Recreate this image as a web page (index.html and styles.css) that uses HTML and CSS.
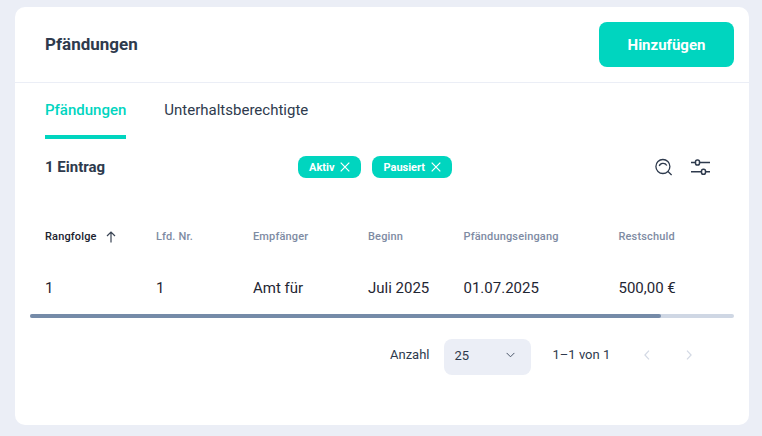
FILE: index.html
```html
<!DOCTYPE html>
<html lang="de">
<head>
<meta charset="utf-8">
<title>Pfändungen</title>
<link rel="stylesheet" href="styles.css">
</head>
<body>
<main class="card">
  <header class="card-head">
    <h1 class="title">Pfändungen</h1>
    <button class="add-btn" type="button">Hinzufügen</button>
  </header>
  <nav class="tabs">
    <a class="tab tab-active">Pfändungen</a>
    <a class="tab">Unterhaltsberechtigte</a>
  </nav>
  <section class="toolbar">
    <div class="count">1 Eintrag</div>
    <div class="chips">
      <span class="chip">Aktiv
        <svg class="chip-x" viewBox="0 0 10 10"><path d="M.7.7l8.6 8.6M9.3.7L.7 9.3"/></svg>
      </span>
      <span class="chip">Pausiert
        <svg class="chip-x" viewBox="0 0 10 10"><path d="M.7.7l8.6 8.6M9.3.7L.7 9.3"/></svg>
      </span>
    </div>
    <div class="tools">
      <svg class="tool tool-search" viewBox="0 0 17 20"><circle cx="7.900" cy="9.500" r="7"/><path d="M4.300 9C5 6 10 5.300 11.800 8.500M13 14.500l3.600 3.600"/></svg>
      <svg class="tool tool-filter" viewBox="0 0 19 20"><path d="M0 5.500h4.500M8.500 5.500H19M0 14.800h10.500M14.500 14.800H19"/><rect x="4.500" y="3" width="4" height="5" rx="1.800"/><rect x="10.500" y="12.300" width="4" height="5" rx="1.800"/></svg>
    </div>
  </section>
  <section class="table">
    <div class="row row-head">
      <div class="th th-sorted">Rangfolge
        <svg class="sort" viewBox="0 0 10 12"><path d="M5 11.500V1M1 5l4-4 4 4"/></svg>
      </div>
      <div class="th">Lfd. Nr.</div>
      <div class="th">Empfänger</div>
      <div class="th">Beginn</div>
      <div class="th">Pfändungseingang</div>
      <div class="th">Restschuld</div>
    </div>
    <div class="row row-body">
      <div class="td">1</div>
      <div class="td">1</div>
      <div class="td">Amt für</div>
      <div class="td">Juli 2025</div>
      <div class="td">01.07.2025</div>
      <div class="td">500,00 €</div>
    </div>
    <div class="scrollbar"><div class="thumb"></div></div>
  </section>
  <footer class="pager">
    <span class="pager-label">Anzahl</span>
    <div class="select">
      <span>25</span>
      <svg class="chev" viewBox="0 0 10 6"><path d="M.7.7L5 5l4.300-4.300"/></svg>
    </div>
    <span class="pager-range">1–1 von 1</span>
    <div class="pager-nav">
      <svg class="nav" viewBox="0 0 6 10"><path d="M5 .7L.9 5 5 9.300"/></svg>
      <svg class="nav" viewBox="0 0 6 10"><path d="M1 .7L5.100 5 1 9.300"/></svg>
    </div>
  </footer>
</main>
</body>
</html>
```

FILE: styles.css
```css
* {
  box-sizing: border-box;
}

html,
body {
  height: 100%;
}

body {
  margin: 0;
  padding: 7px 13px 11px 15px;
  background: #ebeef6;
  font-family: Roboto, "Liberation Sans", sans-serif;
  color: #2e3a4d;
  overflow: hidden;
}

.card {
  height: 418px;
  background: #fff;
  border-radius: 10px;
  display: flex;
  flex-direction: column;
}

.card-head {
  height: 76px;
  padding: 15px 15px 15px 30px;
  border-bottom: 1px solid #ebeef6;
  display: flex;
  align-items: center;
  justify-content: space-between;
  flex-shrink: 0;
}

.title {
  margin: 0;
  padding-bottom: 2px;
  font-size: 17px;
  font-weight: 700;
  line-height: 20px;
  color: #2e3a4d;
}

.add-btn {
  width: 135px;
  height: 45px;
  border: 0;
  border-radius: 8px;
  background: #00d5bf;
  color: #fff;
  font: 700 15px/20px Roboto, "Liberation Sans", sans-serif;
}

.tabs {
  display: flex;
  gap: 38px;
  padding: 0 30px;
  height: 56px;
  flex-shrink: 0;
}

.tab {
  height: 56px;
  padding-top: 18px;
  font-size: 15px;
  line-height: 18px;
  color: #2e3a4d;
}

.tab-active {
  color: #00d5bf;
  font-weight: 500;
  border-bottom: 4px solid #00d5bf;
}

.toolbar {
  height: 56px;
  padding: 0 39px 0 30px;
  display: grid;
  grid-template-columns: 253px 1fr auto;
  align-items: center;
  flex-shrink: 0;
}

.count {
  font-size: 15px;
  font-weight: 700;
  color: #2e3a4d;
}

.chips {
  display: flex;
  gap: 11px;
}

.chip {
  height: 22px;
  padding: 0 11px;
  border-radius: 8px;
  background: #00d5bf;
  color: #fff;
  font-size: 11px;
  font-weight: 700;
  display: flex;
  align-items: center;
  gap: 6px;
}

.chip-x {
  width: 10px;
  height: 10px;
  fill: none;
  stroke: #fff;
  stroke-width: 1.200;
}

.tools {
  display: flex;
  gap: 19px;
  align-items: center;
}

.tool {
  height: 20px;
  fill: none;
  stroke: #2e3a4d;
  stroke-width: 1.300;
}

.tool-search {
  width: 17px;
}

.tool-filter {
  width: 19px;
  stroke-width: 1.500;
}

.table {
  flex-shrink: 0;
  padding: 0 15px;
}

.row {
  display: grid;
  grid-template-columns: 126px 97px 115px 95.500px 155px 1fr;
  align-items: center;
}

.row-head {
  margin-top: 23px;
  height: 37px;
}

.row-body {
  height: 49px;
  margin-top: 8px;
}

.th,
.td {
  white-space: nowrap;
}

.th:first-child,
.td:first-child {
  padding-left: 15px;
}

.th {
  font-size: 11px;
  font-weight: 500;
  color: #7e8ba3;
  letter-spacing: 0.150px;
}

.th-sorted {
  color: #1b2330;
  display: flex;
  align-items: center;
  gap: 9px;
}

.sort {
  width: 10px;
  height: 12px;
  fill: none;
  stroke: #3a4454;
  stroke-width: 1.200;
}

.td {
  font-size: 15px;
  color: #1f2633;
}

.scrollbar {
  height: 4px;
  border-radius: 2px;
  background: #cfd7e4;
  margin-top: 2px;
}

.thumb {
  width: 631px;
  height: 4px;
  border-radius: 2px;
  background: #758ba8;
}

.pager {
  display: flex;
  align-items: flex-start;
  padding-top: 21px;
  padding-left: 375px;
}

.pager-label,
.pager-range {
  font-size: 13px;
  line-height: 32px;
  color: #2e3a4d;
}

.select {
  width: 87px;
  height: 36px;
  margin-left: 14px;
  padding: 0 16px 4px 11px;
  border-radius: 8px;
  background: #ebeef6;
  font-size: 13px;
  color: #2e3a4d;
  display: flex;
  align-items: center;
  justify-content: space-between;
}

.chev {
  width: 9px;
  height: 6px;
  fill: none;
  stroke: #4a5568;
  stroke-width: 1.100;
}

.pager-range {
  margin-left: 22px;
}

.pager-nav {
  display: flex;
  gap: 36px;
  margin-left: 34px;
  margin-top: 11px;
}

.nav {
  width: 6px;
  height: 10px;
  fill: none;
  stroke: #d3d9e4;
  stroke-width: 1.200;
}
```
